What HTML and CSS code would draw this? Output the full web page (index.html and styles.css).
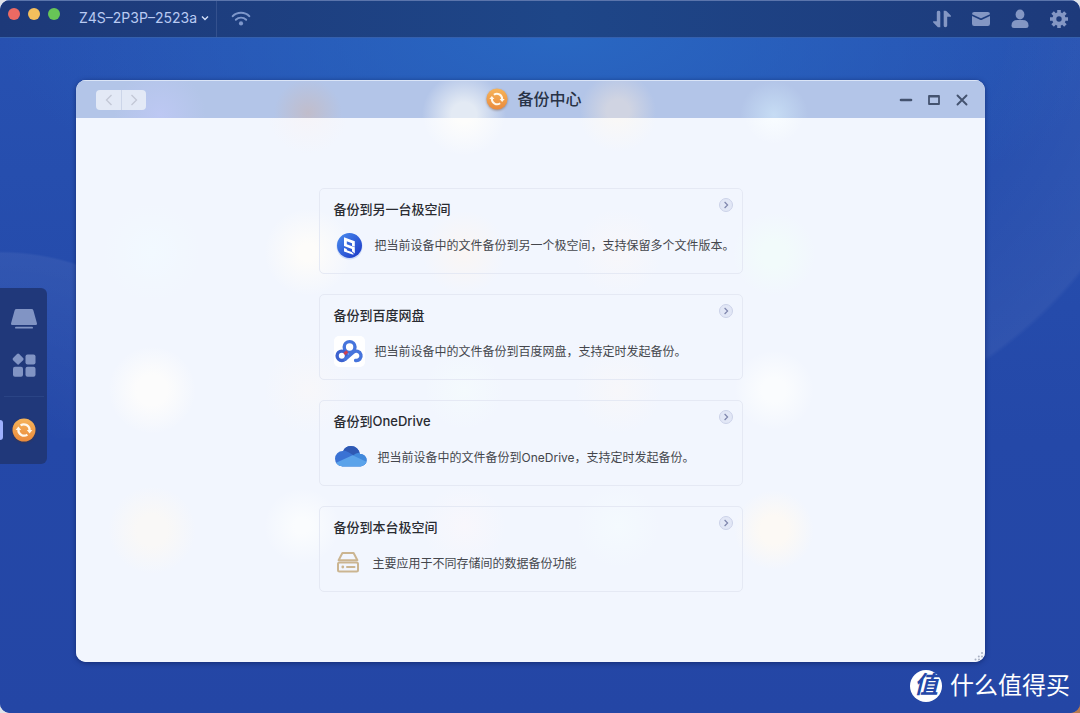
FILE: index.html
```html
<!DOCTYPE html>
<html lang="zh-CN">
<head>
<meta charset="utf-8">
<meta name="viewport" content="width=device-width, initial-scale=1">
<title>备份中心</title>
<link rel="stylesheet" href="styles.css">
</head>
<body>
<svg class="defs" aria-hidden="true">
  <defs>
    <linearGradient id="orange" x1="0" y1="0" x2="0" y2="1"><stop offset="0" stop-color="#f6b45a"/><stop offset="1" stop-color="#ea8a3c"/></linearGradient>
    <linearGradient id="blue" x1="0" y1="0" x2="1" y2="1"><stop offset="0" stop-color="#4b8ff0"/><stop offset="1" stop-color="#1a35c4"/></linearGradient>
    <clipPath id="cloud"><circle cx="8.700" cy="16.700" r="7.700"/><circle cx="17" cy="12.800" r="8.800"/><circle cx="26.400" cy="18.200" r="6.200"/><rect x="8" y="14" width="18.500" height="10.400"/></clipPath>
    <symbol id="sync" viewBox="0 0 24 24">
      <circle cx="12" cy="12" r="11.500" fill="url(#orange)"/>
      <g fill="none" stroke="#fff8ec" stroke-width="2.200">
        <path d="M8.600 7.400A5.700 5.700 0 0 1 17.600 12.400"/>
        <path d="M15.400 16.600A5.700 5.700 0 0 1 6.400 11.600"/>
      </g>
      <path d="M14.800 12h5.600l-2.800 3.400zM9.200 12H3.600l2.800-3.400z" fill="#fff8ec"/>
    </symbol>
    <symbol id="go" viewBox="0 0 14 14">
      <circle cx="7" cy="7" r="6.500" fill="#e2e7f6" stroke="#ccd2e8"/>
      <path d="M5.600 4 8.600 7l-3 3" fill="none" stroke="#7f86ad" stroke-width="1.200"/>
    </symbol>
  </defs>
</svg>
<div class="screen">
  <header class="topbar">
    <div class="lights">
      <button class="light light-close" aria-label="关闭应用"></button>
      <button class="light light-min" aria-label="最小化应用"></button>
      <button class="light light-max" aria-label="全屏"></button>
    </div>
    <div class="device">
      <select class="device-select" aria-label="设备"><option>Z4S–2P3P–2523a</option></select>
      <svg class="device-caret" viewBox="0 0 8 8" aria-hidden="true"><path d="M1 2.500 4 5.500 7 2.500" fill="none" stroke="#d5e0fa" stroke-width="1.400"/></svg>
    </div>
    <button class="icon-btn wifi" aria-label="网络">
      <svg viewBox="0 0 20 20" width="20" height="20"><g fill="none" stroke="#7e97cb" stroke-width="1.900" stroke-linecap="round"><path d="M1.600 7.200a12 12 0 0 1 16.800 0"/><path d="M4.800 10.800a7.400 7.400 0 0 1 10.400 0"/></g><circle cx="10" cy="14.400" r="2.100" fill="#7e97cb"/></svg>
    </button>
    <nav class="tools" aria-label="系统">
      <button class="icon-btn" aria-label="传输"><svg viewBox="0 0 20 20" width="20" height="20"><path d="M6.700 1.800q1.600 0 1.600 1.400V18.200H6.500q-.7 0-1.100-.5L1.200 13.600q-.7-1.300.5-1.300h3.100V3.200q0-1.400 1.900-1.400zM13.300 18.200q-1.600 0-1.600-1.400V1.800h1.800q.7 0 1.100.5l4.200 4.100q.7 1.300-.5 1.300h-3.100v9.100q0 1.400-1.900 1.400z" fill="#8497c4"/></svg></button>
      <button class="icon-btn" aria-label="消息"><svg viewBox="0 0 20 20" width="20" height="20"><path d="M1 5.200Q1 3 3.200 3h13.600Q19 3 19 5.200L10.800 9q-.8.4-1.600 0zM1 7l8 3.800q1 .5 2 0L19 7v7.800q0 2.200-2.200 2.200H3.200Q1 17 1 14.800z" fill="#8497c4"/></svg></button>
      <button class="icon-btn" aria-label="用户"><svg viewBox="0 0 20 20" width="20" height="20"><ellipse cx="10" cy="5.500" rx="4.400" ry="4.900" fill="#8497c4"/><path d="M1.500 16.500q0-5.500 6-5.500h5q6 0 6 5.500 0 2.500-2.500 2.500H4q-2.500 0-2.500-2.500z" fill="#8497c4"/></svg></button>
      <button class="icon-btn" aria-label="设置"><svg viewBox="0 0 20 20" width="20" height="20"><g fill="none" stroke="#8497c4"><circle cx="10" cy="10" r="4.700" stroke-width="4"/><path d="M10 1v3M10 16v3M1 10h3M16 10h3M3.600 3.600l2.200 2.200M14.200 14.200l2.200 2.200M3.600 16.400l2.200-2.200M14.200 5.800l2.200-2.200" stroke-width="3.600"/></g></svg></button>
    </nav>
  </header>

  <main class="desktop">
    <aside class="dock">
      <button class="dock-btn" aria-label="桌面"><svg viewBox="0 0 28 22" width="28" height="22"><path d="M6.500 1h15q1.500 0 1.900 1.400L27 15.500q.2 1.500-1.300 1.500H2.300Q.8 17 1 15.500L4.600 2.400Q5 1 6.500 1zM6 18.800h16q1 0 1 .9t-1 .9H6q-1 0-1-.9t1-.9z" fill="#8194c4"/></svg></button>
      <button class="dock-btn" aria-label="应用"><svg viewBox="0 0 26 26" width="26" height="26"><g fill="#8194c4"><rect x="2.800" y="2.800" width="8.600" height="8.600" rx="1.500" transform="rotate(45 7.100 7.100)"/><rect x="14.500" y="2.500" width="10" height="10" rx="2"/><rect x="2" y="14.800" width="10" height="10" rx="2"/><rect x="14.500" y="14.800" width="10" height="10" rx="2"/></g></svg></button>
      <hr class="dock-line">
      <button class="dock-btn dock-active" aria-label="备份中心"><svg class="sync-shadow" width="24" height="24"><use href="#sync"/></svg></button>
    </aside>

    <section class="window">
      <header class="titlebar">
        <div class="history">
          <button class="history-btn" aria-label="后退"><svg viewBox="0 0 8 12" width="8" height="12"><path d="M6.500 1 1.500 6l5 5" fill="none" stroke="#c3c8d6" stroke-width="1.400"/></svg></button>
          <button class="history-btn" aria-label="前进"><svg viewBox="0 0 8 12" width="8" height="12"><path d="m1.500 1 5 5-5 5" fill="none" stroke="#c3c8d6" stroke-width="1.400"/></svg></button>
        </div>
        <h1 class="title"><svg class="sync-shadow" width="22" height="22" aria-hidden="true"><use href="#sync"/></svg>备份中心</h1>
        <div class="controls">
          <button class="icon-btn" aria-label="最小化"><svg viewBox="0 0 14 14" width="14" height="14"><path d="M2 7h10" stroke="#44536f" stroke-width="2.600" stroke-linecap="round"/></svg></button>
          <button class="icon-btn" aria-label="最大化"><svg viewBox="0 0 14 14" width="14" height="14"><path d="M2 3h10v8H2z" fill="none" stroke="#44536f" stroke-width="1.800" stroke-linejoin="round"/><path d="M2 3.300h10" stroke="#44536f" stroke-width="2.400"/></svg></button>
          <button class="icon-btn" aria-label="关闭"><svg viewBox="0 0 14 14" width="14" height="14"><path d="m2.500 2.500 9 9m0-9-9 9" stroke="#44536f" stroke-width="1.900" stroke-linecap="round"/></svg></button>
        </div>
      </header>

      <div class="content">
        <article class="card">
          <div class="card-head"><h2 class="card-title">备份到另一台极空间</h2><button class="go" aria-label="备份到另一台极空间"><svg width="14" height="14"><use href="#go"/></svg></button></div>
          <div class="card-row">
            <svg class="card-icon" viewBox="0 0 32 32" aria-hidden="true"><circle cx="15.500" cy="16.500" r="13" fill="#cfdcf8"/><circle cx="15.500" cy="15.500" r="12.500" fill="url(#blue)"/><path d="M10 7.300 20.800 11.200v5.600l-2.800-1v-2.600l-5.200-1.900v3l8 2.900v6.200L18 21.200v-2.300l-8-2.900zM10 18l2.800 1v1.300l4.800 1.700 2.400 2.200-1.500.3L10 21.400z" fill="#fff"/></svg>
            <p class="card-text">把当前设备中的文件备份到另一个极空间，支持保留多个文件版本。</p>
          </div>
        </article>
        <article class="card">
          <div class="card-head"><h2 class="card-title">备份到百度网盘</h2><button class="go" aria-label="备份到百度网盘"><svg width="14" height="14"><use href="#go"/></svg></button></div>
          <div class="card-row">
            <svg class="card-icon" viewBox="0 0 32 32" aria-hidden="true"><rect width="31" height="31" rx="5" fill="#fff"/><g fill="none" stroke-width="3.400"><circle cx="15.600" cy="11" r="5.400" stroke="#4674dc"/><circle cx="7.800" cy="19.800" r="4.700" stroke="#3c62cf"/><path d="m11.200 23.300 8.100-7a4.700 4.700 0 1 1 2.300 8.200" stroke="#4674dc" stroke-linecap="round"/><path d="m10.800 15.600 2 2.300" stroke="#cf4150" stroke-width="4"/></g></svg>
            <p class="card-text">把当前设备中的文件备份到百度网盘，支持定时发起备份。</p>
          </div>
        </article>
        <article class="card">
          <div class="card-head"><h2 class="card-title">备份到OneDrive</h2><button class="go" aria-label="备份到OneDrive"><svg width="14" height="14"><use href="#go"/></svg></button></div>
          <div class="card-row">
            <svg class="card-icon card-icon-wide" viewBox="0 0 35 32" aria-hidden="true"><g clip-path="url(#cloud)"><rect width="35" height="32" fill="#3a72d4"/><path d="M7 8.600Q11 8 14.500 10.200l7 4.300L30 8V0H7z" fill="#2f59b4"/><path d="m18 14 4-2.400q2-1 4.400-.8H34v12z" fill="#4189dc"/><path d="M0 21.700 18.500 13.300 35 21v5H0z" fill="#5ba3ea"/></g></svg>
            <p class="card-text">把当前设备中的文件备份到OneDrive，支持定时发起备份。</p>
          </div>
        </article>
        <article class="card">
          <div class="card-head"><h2 class="card-title">备份到本台极空间</h2><button class="go" aria-label="备份到本台极空间"><svg width="14" height="14"><use href="#go"/></svg></button></div>
          <div class="card-row">
            <svg class="card-icon card-icon-narrow" viewBox="0 0 30 32" aria-hidden="true"><g fill="none" stroke="#cbb591" stroke-width="2" stroke-linejoin="round" stroke-linecap="round"><path d="M4.600 12.200 8.400 5h11.200l3.800 7.200z"/><rect x="4" y="14.600" width="20" height="8.800" rx="1.500"/><path d="M13 19h7.500"/></g><circle cx="8.800" cy="19" r="1.400" fill="#cbb591"/></svg>
            <p class="card-text">主要应用于不同存储间的数据备份功能</p>
          </div>
        </article>
      </div>
      <svg class="grip" viewBox="0 0 10 10" aria-hidden="true"><g fill="#a9b0c2"><circle cx="8" cy="2" r="1"/><circle cx="8" cy="5.500" r="1"/><circle cx="4.800" cy="5.500" r="1"/><circle cx="1.500" cy="8.500" r="1"/><circle cx="5" cy="8.500" r="1"/></g></svg>
    </section>
  </main>

  <div class="watermark"><span class="badge">值</span>什么值得买</div>
</div>
</body>
</html>
```
FILE: styles.css
```css
* { box-sizing: border-box; }

html { background: radial-gradient(circle 40px at 100% 100%, #b87a50 90%, #dfe3ea); }

body {
  margin: 0;
  font-family: Inter, "Noto Sans CJK SC", sans-serif;
  color: #44464c;
}

h1, h2, p { margin: 0; }

button {
  padding: 0;
  border: 0;
  background: none;
  display: flex;
  align-items: center;
  justify-content: center;
}

.defs { position: absolute; width: 0; height: 0; }

.screen {
  position: relative;
  min-height: 100vh;
  display: flex;
  flex-direction: column;
  border-radius: 10px;
  overflow: hidden;
  background: #2448a8;
}

/* Top bar */
.topbar {
  height: 38px;
  display: flex;
  align-items: stretch;
  padding-right: 11px;
  background: linear-gradient(to right, #1d3979, #1e4688 52%, #1d3a7b);
  border-top: 1px solid #5b75ac;
  border-bottom: 1px solid #3560ad;
}

.lights {
  display: flex;
  gap: 8px;
  padding: 7px 19px 0 8px;
}

.light {
  width: 12px;
  height: 12px;
  border-radius: 50%;
}

.light-close { background: #ec6a63; }
.light-min { background: #f4bf5d; }
.light-max { background: #67c557; }

.device {
  display: flex;
  align-items: center;
  gap: 4px;
  padding: 0 7px 3px 0;
  border-right: 1px solid #34518e;
}

.device-select {
  appearance: none;
  border: 0;
  padding: 0;
  background: none;
  font: 14px Inter, sans-serif;
  color: #b9caf2;
}

.device-caret { width: 8px; height: 8px; }

.icon-btn { width: 20px; }

.wifi { margin-left: 14px; }

.tools {
  display: flex;
  gap: 19px;
  margin-left: auto;
}

/* Desktop */
.desktop {
  flex: 1;
  display: flex;
  align-items: center;
  background:
    radial-gradient(circle 442px at -247px -42px, rgba(255, 255, 255, 0) 60%, rgba(255, 255, 255, 0.05) 99%, transparent 100%) right top / 95px 100% no-repeat,
    radial-gradient(circle 247px at 0 460px, rgba(255, 255, 255, 0) 30%, rgba(255, 255, 255, 0.06) 99%, transparent 100%) left top / 76px 400px no-repeat,
    radial-gradient(ellipse 560px 200px at 52% 0, #2967c2, rgba(41, 103, 194, 0)),
    linear-gradient(to bottom, #2751b1, #2448a8 60%, #2446a5);
}

.dock {
  width: 47px;
  height: 176px;
  display: flex;
  flex-direction: column;
  align-items: center;
  padding-top: 20px;
  border-radius: 0 6px 6px 0;
  background: #20387a;
}

.dock-btn {
  width: 100%;
  height: 24px;
  margin-bottom: 22px;
}

.dock-line {
  width: 40px;
  margin: -3px 0 21px;
  border: 0;
  border-top: 1px solid #2a4485;
}

.dock-active { position: relative; }

.dock-active::before {
  content: "";
  position: absolute;
  left: 0;
  top: 2px;
  width: 3px;
  height: 20px;
  border-radius: 0 3px 3px 0;
  background: #9db0ff;
}

.sync-shadow { filter: drop-shadow(0 1px 1px rgba(90, 50, 20, 0.4)); }

/* Window */
.window {
  position: relative;
  flex: 1;
  align-self: stretch;
  display: flex;
  flex-direction: column;
  margin: 42px 95px 51px 29px;
  border-radius: 10px;
  overflow: hidden;
  background: #f2f6fe;
  box-shadow: 0 1px 5px rgba(10, 25, 80, 0.6);
}

.titlebar {
  height: 38px;
  display: grid;
  grid-template-columns: 1fr auto 1fr;
  align-items: center;
  padding: 0 13px 2px 20px;
  border-top: 1px solid #dbe5f7;
  background:
    radial-gradient(circle 46px at 84px 34px, #bdc8f3, transparent),
    radial-gradient(circle 34px at 232px 32px, #c1bdcb, transparent),
    radial-gradient(circle 42px at 388px 34px, #e3eaf4 30%, transparent),
    radial-gradient(circle 38px at 542px 30px, #d0d4e2 30%, transparent),
    radial-gradient(circle 34px at 698px 34px, #c6dcf4, transparent),
    #b3c5e8;
}

.history {
  display: flex;
  justify-self: start;
  margin-top: 2px;
  border-radius: 4px;
  overflow: hidden;
  background: #e3e9f6;
}

.history-btn { width: 25px; height: 20px; }

.history-btn + .history-btn { border-left: 1px solid #ccd5e9; }

.title {
  display: flex;
  align-items: center;
  gap: 9px;
  font-size: 16px;
  font-weight: 500;
  line-height: 24px;
  color: #283246;
}

.controls {
  display: flex;
  gap: 8px;
  margin-top: 2px;
  justify-self: end;
}

.content {
  flex: 1;
  display: flex;
  flex-direction: column;
  align-items: center;
  justify-content: center;
  gap: 20px;
  padding: 20px;
  background:
    radial-gradient(circle 42px at 388px -4px, #fdfdfc 20%, transparent),
    radial-gradient(circle 40px at 542px -6px, #f9f8f7 20%, transparent),
    radial-gradient(circle 30px at 698px -4px, #f8fcff 20%, transparent),
    radial-gradient(circle 40px at 232px -4px, #f6f4f8, transparent),
    radial-gradient(circle 50px at 76px 134px, #f2f9ff, transparent),
    radial-gradient(circle 44px at 232px 134px, #fdfcfa 20%, transparent),
    radial-gradient(circle 42px at 388px 134px, #faf6f4, transparent),
    radial-gradient(circle 44px at 542px 134px, #f8f7fa, transparent),
    radial-gradient(circle 42px at 698px 136px, #f2fbfb 30%, transparent),
    radial-gradient(circle 44px at 76px 272px, #fcfcfc 35%, transparent),
    radial-gradient(circle 44px at 232px 272px, #f7f7fa, transparent),
    radial-gradient(circle 40px at 388px 272px, #f4fafd, transparent),
    radial-gradient(circle 44px at 542px 272px, #f7f7fa, transparent),
    radial-gradient(circle 40px at 698px 272px, #fafcfe 30%, transparent),
    radial-gradient(circle 44px at 76px 412px, #f9f8f7 35%, transparent),
    radial-gradient(circle 38px at 226px 408px, #fafcfe 20%, transparent),
    radial-gradient(circle 42px at 388px 408px, #f8f7fc, transparent),
    radial-gradient(circle 42px at 542px 408px, #f4fafe, transparent),
    radial-gradient(circle 40px at 698px 412px, #fcf9f5 35%, transparent),
    #f2f6fe;
}

.card {
  width: 424px;
  max-width: 100%;
  padding: 9px 9px 11px 14px;
  border: 1px solid #e5e9f4;
  border-radius: 5px;
}

.card-head {
  display: flex;
  align-items: flex-start;
  justify-content: space-between;
  margin-bottom: 10px;
}

.card-title {
  font-size: 13px;
  font-weight: 500;
  line-height: 22px;
  color: #292b31;
}

.card-row {
  display: flex;
  align-items: center;
  gap: 9px;
}

.card-icon { flex: none; width: 32px; height: 32px; }
.card-icon-wide { width: 35px; }
.card-icon-narrow { width: 30px; }

.card-text {
  font-size: 12px;
  line-height: 18px;
  white-space: nowrap;
}

.grip {
  position: absolute;
  right: 1px;
  bottom: 1px;
  width: 10px;
  height: 10px;
}

.watermark {
  position: absolute;
  right: 10px;
  bottom: 11px;
  display: flex;
  align-items: center;
  gap: 8px;
  font-size: 24px;
  line-height: 32px;
  color: #fff;
}

.badge {
  width: 32px;
  height: 32px;
  border-radius: 50%;
  background: #fff;
  color: #2448a8;
  font-weight: 700;
  font-style: italic;
  line-height: 30px;
  text-align: center;
}
```
